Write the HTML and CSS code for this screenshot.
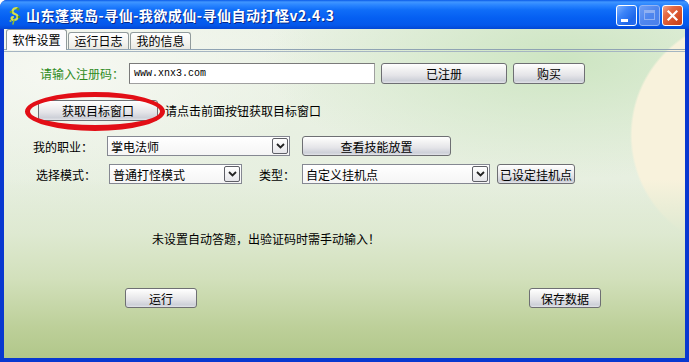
FILE: index.html
```html
<!DOCTYPE html>
<html lang="zh-CN">
<head>
    <meta charset="utf-8"/>
    <title>寻仙自动打怪</title>
    <link rel="stylesheet" href="styles.css">
</head>
<body>

    <div class="window">
        <div class="titlebar">
            <svg class="app-icon" width="14" height="19" viewBox="0 0 14 19">
                <path d="M9 2 C4 2 3 7 7 8 C11 9 10 14 6 14 C3 14 3 11 5 11" fill="none" stroke="#d6e04a" stroke-width="2.2" stroke-linecap="round"/>
                <circle cx="10" cy="3" r="1.6" fill="#5e9a2a"/>
                <circle cx="3" cy="6" r="1.3" fill="#6aa832"/>
                <circle cx="11" cy="11" r="1.3" fill="#4f8f24"/>
                <path d="M6 14 L5 18" stroke="#8ab83a" stroke-width="1.6" stroke-linecap="round"/>
                <circle cx="2.5" cy="15" r="1.1" fill="#a9c940"/>
            </svg>
            <span class="title">山东蓬莱岛-寻仙-我欲成仙-寻仙自动打怪v2.4.3</span>
            <div class="caption-btns">
                <div class="cap-btn cap-min"><span></span></div>
                <div class="cap-btn cap-max"><span></span></div>
                <div class="cap-btn cap-close">
                    <svg width="13" height="13" viewBox="0 0 13 13">
                        <path d="M2.5 2.5 L10.5 10.5 M10.5 2.5 L2.5 10.5" stroke="#fff" stroke-width="2.2" stroke-linecap="square"/>
                    </svg>
                </div>
            </div>
        </div>

        <div class="client">
            <div class="tabs">
                <div class="tab active">软件设置</div>
                <div class="tab">运行日志</div>
                <div class="tab">我的信息</div>
            </div>

            <div class="panel">
                <div class="row row-reg">
                    <label class="lbl-green">请输入注册码：</label>
                    <div class="textbox">www.xnx3.com</div>
                    <button class="btn btn-registered">已注册</button>
                    <button class="btn btn-buy">购买</button>
                </div>

                <div class="row row-target">
                    <div class="marked">
                        <button class="btn btn-target">获取目标窗口</button>
                        <div class="ring"></div>
                    </div>
                    <span class="hint">请点击前面按钮获取目标窗口</span>
                </div>

                <div class="row row-job">
                    <label class="lbl">我的职业：</label>
                    <div class="combo combo-job">
                        <span class="combo-text">掌电法师</span>
                        <span class="combo-arrow"><svg width="9" height="6" viewBox="0 0 9 6"><path d="M1 1 L4.5 4.5 L8 1" fill="none" stroke="#222" stroke-width="1.8"/></svg></span>
                    </div>
                    <button class="btn btn-skill">查看技能放置</button>
                </div>

                <div class="row row-mode">
                    <label class="lbl">选择模式：</label>
                    <div class="combo combo-mode">
                        <span class="combo-text">普通打怪模式</span>
                        <span class="combo-arrow"><svg width="9" height="6" viewBox="0 0 9 6"><path d="M1 1 L4.5 4.5 L8 1" fill="none" stroke="#222" stroke-width="1.8"/></svg></span>
                    </div>
                    <label class="lbl lbl-type">类型：</label>
                    <div class="combo combo-type">
                        <span class="combo-text">自定义挂机点</span>
                        <span class="combo-arrow"><svg width="9" height="6" viewBox="0 0 9 6"><path d="M1 1 L4.5 4.5 L8 1" fill="none" stroke="#222" stroke-width="1.8"/></svg></span>
                    </div>
                    <button class="btn btn-point">已设定挂机点</button>
                </div>

                <p class="notice">未设置自动答题，出验证码时需手动输入！</p>

                <div class="row row-bottom">
                    <button class="btn btn-run">运行</button>
                    <button class="btn btn-save">保存数据</button>
                </div>
            </div>
        </div>
    </div>

</body>
</html>
```

FILE: styles.css
```css
body {
    margin: 0;
    background: #fff;
    font-family: "Noto Sans CJK SC", "Liberation Sans", sans-serif;
    font-size: 12px;
    color: #000;
}

.window {
    width: 689px;
    height: 362px;
    box-sizing: border-box;
    background: #0838d0;
    border-radius: 7px 7px 0 0;
    overflow: hidden;
}

/* title bar */
.titlebar {
    height: 29px;
    display: flex;
    align-items: center;
    padding-left: 8px;
    box-sizing: border-box;
    background: linear-gradient(#0a5ae8 0, #4096ff 2px, #2a85ff 5px, #0f6df8 10px, #055ff2 18px, #0458eb 25px, #0347d4 29px);
}

.app-icon {
    margin-top: 1px;
}

.title {
    margin-left: 4px;
    color: #fff;
    font-size: 14px;
    font-weight: bold;
    letter-spacing: 0.5px;
    text-shadow: 1px 1px 0 #0a2a8a;
}

.caption-btns {
    margin-left: auto;
    padding-right: 6px;
    padding-top: 1px;
    display: flex;
    gap: 2px;
}

.cap-btn {
    width: 21px;
    height: 21px;
    box-sizing: border-box;
    border: 1px solid #fff;
    border-radius: 3px;
    position: relative;
    display: flex;
    align-items: center;
    justify-content: center;
}

.cap-min {
    background: linear-gradient(135deg, #7fb2ff 0%, #3c84f8 35%, #1d66ea 75%, #2a6ef0 100%);
}

.cap-min span {
    position: absolute;
    left: 4px;
    bottom: 3px;
    width: 7px;
    height: 3px;
    background: #fff;
}

.cap-max {
    background: linear-gradient(135deg, #6f9ef4 0%, #4f86ee 50%, #4a80ec 100%);
    border-color: #93b4f4;
}

.cap-max span {
    width: 11px;
    height: 10px;
    box-sizing: border-box;
    border: 1px solid #8fb0f2;
    border-top-width: 3px;
}

.cap-close {
    background: linear-gradient(135deg, #f2a58c 0%, #e46a45 30%, #d24a22 75%, #c83f1c 100%);
}

/* client area */
.client {
    margin: 0 4px;
    height: 329px;
    background:
        linear-gradient(to bottom, rgba(224, 234, 212, 0) 0, rgba(224, 234, 212, 0) 150px, rgba(222, 233, 209, 1) 205px, #d2e0bb 250px, #bccf98 300px, #b1c78a 329px),
        radial-gradient(circle 118px at 744px 106px, #f8f2dc 98%, rgba(248, 242, 220, 0) 100%),
        radial-gradient(ellipse 300px 120px at 560px 30px, #cde5c2, rgba(205, 229, 194, 0)),
        radial-gradient(ellipse 260px 120px at 60px 40px, #f6f8f2, rgba(246, 248, 242, 0)),
        linear-gradient(#ebf2e6, #e2ecd9);
}

.tabs {
    height: 21px;
    box-sizing: border-box;
    padding-left: 2px;
    display: flex;
    align-items: flex-end;
    border-bottom: 1px solid #8fa3b3;
}

.tab {
    width: 61px;
    height: 17px;
    margin-right: 1px;
    box-sizing: border-box;
    border: 1px solid #919b9c;
    border-bottom: none;
    border-radius: 3px 3px 0 0;
    background: linear-gradient(#ffffff, #f3f3ef 60%, #e9e8e2);
    text-align: center;
    line-height: 16px;
    font-size: 12px;
}

.tab.active {
    height: 21px;
    margin-bottom: -1px;
    background: #fcfcfe;
    line-height: 19px;
}

.panel {
    margin-top: 1px;
    border-top: 1px solid #a5b5c2;
    height: 305px;
    box-sizing: border-box;
    padding-top: 11px;
}

.row {
    display: flex;
    align-items: center;
}

.lbl, .lbl-green {
    white-space: nowrap;
}

.lbl-green {
    color: #2e8b1e;
    margin-left: 36px;
    width: 89px;
}

/* controls */
.btn {
    height: 21px;
    margin: 0;
    padding: 0;
    box-sizing: border-box;
    border: 1px solid #6e6f73;
    border-radius: 3px;
    background: linear-gradient(#ffffff 0%, #f4f4f4 25%, #e4e4e8 60%, #cdd0d8 88%, #e2e3e8 100%);
    font-family: inherit;
    font-size: 12px;
    color: #000;
}

.textbox {
    width: 246px;
    height: 21px;
    box-sizing: border-box;
    border: 1px solid #7a7a7a;
    border-right-color: #a0a0a0;
    border-bottom-color: #a0a0a0;
    background: #fff;
    font-family: "Liberation Mono", monospace;
    font-size: 10px;
    line-height: 19px;
    padding-left: 4px;
}

.btn-registered {
    margin-left: 6px;
    width: 126px;
}

.btn-buy {
    margin-left: 6px;
    width: 72px;
}

.row-target {
    margin-top: 16px;
}

.marked {
    position: relative;
    margin-left: 34px;
}

.btn-target {
    width: 120px;
    display: block;
}

.ring {
    position: absolute;
    left: -13px;
    top: -8px;
    width: 140px;
    height: 39px;
    box-sizing: border-box;
    border: 5px solid #e20e16;
    border-bottom-width: 6px;
    border-radius: 50%;
}

.hint {
    margin-left: 7px;
}

.row-job {
    margin-top: 15px;
}

.row-job .lbl {
    margin-left: 29px;
    width: 60px;
}

.combo {
    height: 20px;
    box-sizing: border-box;
    border: 1px solid #858892;
    background: linear-gradient(#ffffff, #f5f5f5);
    display: flex;
    align-items: center;
}

.combo-text {
    padding-left: 3px;
    flex: 1;
}

.combo-arrow {
    width: 16px;
    height: 16px;
    margin-right: 1px;
    box-sizing: border-box;
    border: 1px solid #5e5f66;
    border-radius: 2px;
    background: linear-gradient(#ffffff, #e6e6ea);
    display: flex;
    align-items: center;
    justify-content: center;
}

.combo-job {
    margin-left: 14px;
    width: 183px;
}

.btn-skill {
    margin-left: 12px;
    width: 149px;
    height: 20px;
}

.row-mode {
    margin-top: 8px;
}

.row-mode .lbl {
    margin-left: 32px;
    width: 60px;
}

.combo-mode {
    margin-left: 13px;
    width: 133px;
}

.row-mode .lbl-type {
    margin-left: 17px;
    width: 36px;
}

.combo-type {
    margin-left: 7px;
    width: 188px;
}

.btn-point {
    margin-left: 7px;
    width: 78px;
    height: 20px;
}

.notice {
    margin: 48px 0 0 148px;
    line-height: 14px;
}

.row-bottom {
    margin-top: 42px;
}

.btn-run {
    margin-left: 121px;
    width: 72px;
    height: 20px;
}

.btn-save {
    margin-left: 332px;
    width: 72px;
    height: 20px;
}
```
